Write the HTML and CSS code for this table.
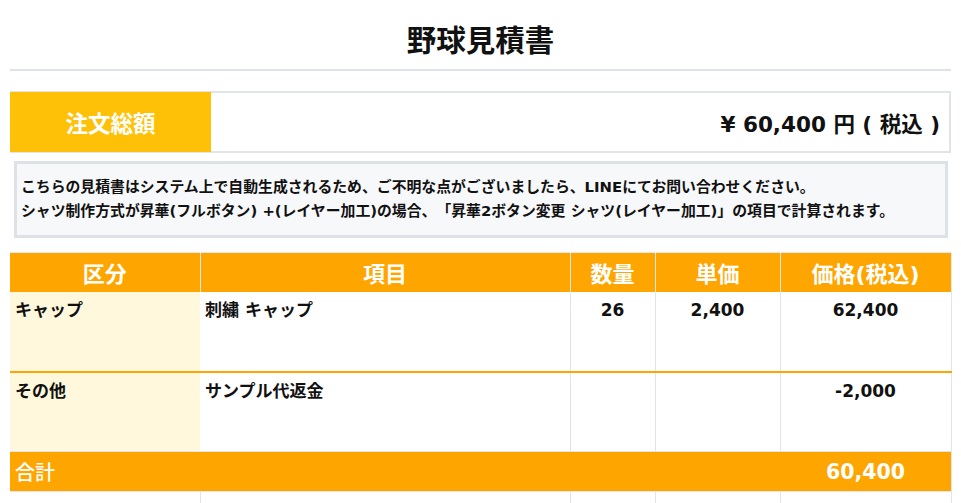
FILE: index.html
```html
<!DOCTYPE html>
<html lang="ja">
<head>
<meta charset="utf-8">
<title>野球見積書</title>
<link rel="stylesheet" href="styles.css">
</head>
<body>
<div class="page">
  <h1 class="title">野球見積書</h1>
  <div class="rule"></div>
  <div class="total-box">
    <div class="total-label">注文総額</div>
    <div class="total-value">¥ 60,400 円 ( 税込 )</div>
  </div>
  <div class="note">
    <p>こちらの見積書はシステム上で自動生成されるため、ご不明な点がございましたら、LINEにてお問い合わせください。</p>
    <p>シャツ制作方式が昇華(フルボタン) +(レイヤー加工)の場合、「昇華2ボタン変更 シャツ(レイヤー加工)」の項目で計算されます。</p>
  </div>
  <table class="quote">
    <colgroup>
      <col class="c1"><col class="c2"><col class="c3"><col class="c4"><col class="c5">
    </colgroup>
    <thead>
      <tr><th>区分</th><th>項目</th><th>数量</th><th>単価</th><th>価格(税込)</th></tr>
    </thead>
    <tbody>
      <tr class="item sep">
        <td class="cat">キャップ</td><td class="name">刺繍 キャップ</td><td class="num">26</td><td class="num">2,400</td><td class="num">62,400</td>
      </tr>
      <tr class="item">
        <td class="cat">その他</td><td class="name">サンプル代返金</td><td class="num"></td><td class="num"></td><td class="num">-2,000</td>
      </tr>
      <tr class="sum">
        <td colspan="4" class="sum-label">合計</td><td class="num sum-value">60,400</td>
      </tr>
      <tr class="blank">
        <td></td><td></td><td></td><td></td><td></td>
      </tr>
    </tbody>
  </table>
</div>
</body>
</html>
```
FILE: styles.css
```css
* { box-sizing: border-box; }
html, body { margin: 0; padding: 0; background: #fff; }
body {
  font-family: "DejaVu Sans", "Noto Sans CJK JP", sans-serif;
  color: #111;
  overflow: hidden;
  text-spacing-trim: space-all;
}
.page { padding: 0 10px; }
.title {
  margin: 0;
  padding-top: 18px;
  font-family: "Noto Sans CJK JP", sans-serif;
  font-size: 29.5px;
  font-weight: 700;
  line-height: 40px;
  text-align: center;
  color: #111;
}
.rule {
  height: 2px;
  margin-top: 11px;
  background: #dfe3e7;
}
.total-box {
  display: flex;
  margin-top: 20px;
  height: 62px;
  border: 2px solid #e1e5e9;
  border-left: 0;
}
.total-label {
  width: 201px;
  margin-top: -1px;
  margin-bottom: -1px;
  background: #ffc107;
  color: #fff;
  font-family: "Noto Sans CJK JP", sans-serif;
  font-size: 22.5px;
  font-weight: 700;
  display: flex;
  align-items: center;
  justify-content: center;
}
.total-value {
  flex: 1;
  display: flex;
  align-items: center;
  justify-content: flex-end;
  padding-right: 9px;
  font-size: 21.5px;
  font-weight: 700;
  color: #111;
}
.note {
  margin: 8px 3px 0 4px;
  border: 3px solid #dee2e6;
  background: #f7f8fa;
  padding: 11px 6px 12px 4px;
  font-size: 14.85px;
  font-weight: 700;
  line-height: 24px;
}
.note p { margin: 0; white-space: nowrap; }
.quote {
  margin-top: 14px;
  width: 941px;
  border-collapse: collapse;
  table-layout: fixed;
}
.c1 { width: 190px; }
.c2 { width: 370px; }
.c3 { width: 85px; }
.c4 { width: 125px; }
.c5 { width: 171px; }
.quote th {
  height: 39px;
  background: #ffa500;
  color: #fff;
  font-size: 22px;
  font-weight: 700;
  text-align: center;
  border: 1px solid #e6e8ea;
  border-bottom: 0;
  padding: 0;
}
.quote td {
  border: 1px solid #e1e4e8;
  vertical-align: top;
  padding: 6px 5px;
  font-size: 17px;
  font-weight: 700;
  line-height: 24px;
}
.quote thead th:first-child, .quote tbody td:first-child { border-left: 0; }
.quote .item td { height: 80px; border-top: 0; }
.quote .item.sep td { border-bottom: 2px solid #ffa500; }
.quote .cat { background: #fff8dc; border-right: 0; }
.quote .item .name { border-left: 0; }
.num { text-align: center; }
.quote .sum td {
  height: 40px;
  background: #ffa500;
  color: #fff;
  vertical-align: middle;
}
.quote .sum .sum-label {
  border-right-color: #ffa500;
  font-family: "Noto Sans CJK JP", sans-serif;
  font-weight: 500;
  font-size: 20px;
}
.quote .sum-value { font-size: 20.5px; }
.blank td { height: 40px; }
```
